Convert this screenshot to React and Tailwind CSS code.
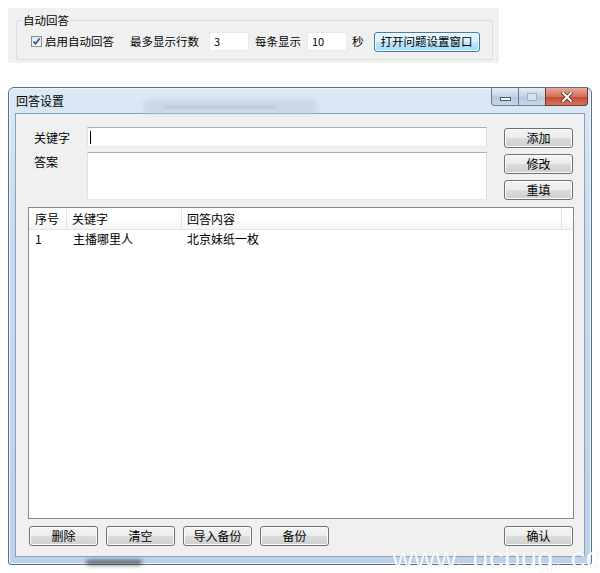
import React from "react";

const font = { fontFamily: '"Noto Sans CJK SC", "Noto Sans", sans-serif' };

function WinButton({ children, className = "" }) {
  return (
    <div
      className={
        "flex items-center justify-center h-[20px] w-[69px] rounded-[3px] border border-[#707070] text-[12px] text-black leading-none bg-[linear-gradient(to_bottom,#f4f4f4_0%,#ececec_48%,#dcdcdc_52%,#cfcfcf_100%)] shadow-[inset_0_0_0_1px_#fbfbfb] " +
        className
      }
    >
      {children}
    </div>
  );
}

export default function App() {
  return (
    <div
      className="relative w-[600px] h-[573px] bg-white overflow-hidden text-[12px] text-black"
      style={font}
    >
      {/* top panel */}
      <div className="ml-[8px] mt-[8px] w-[491px] h-[55px] bg-[#f0f0f0] pt-[12px] pl-[8px] pr-[6px]">
        <div className="relative h-[40px] border border-[#d5dfe5] rounded-[2px]">
          <div className="absolute left-[5px] top-[-9px] px-[1px] bg-[#f0f0f0] leading-[16px] text-[11.5px]">
            自动回答
          </div>
          <div className="flex items-center h-full pt-[3px] pl-[14px] text-[11.5px]">
            <div className="w-[11px] h-[11px] border border-[#8e8f8f] bg-[linear-gradient(to_bottom,#dfe8f2,#f6f9fc)] flex items-center justify-center">
              <svg width="9" height="9" viewBox="0 0 9 9">
                <path d="M1.5 4.5 L3.6 6.8 L7.6 1.6" stroke="#2d4e8a" strokeWidth="1.6" fill="none" />
              </svg>
            </div>
            <span className="ml-[3px]">启用自动回答</span>
            <span className="ml-[16px]">最多显示行数</span>
            <div className="ml-[10px] w-[40px] h-[19px] bg-white border border-[#e3e9ef] flex items-center pl-[4px] text-[11px]">
              3
            </div>
            <span className="ml-[6px]">每条显示</span>
            <div className="ml-[6px] w-[40px] h-[19px] bg-white border border-[#e3e9ef] flex items-center pl-[4px] text-[11px]">
              10
            </div>
            <span className="ml-[5px]">秒</span>
            <div className="ml-[10px] w-[106px] h-[20px] rounded-[3px] border border-[#3c7fb1] flex items-center justify-center bg-[linear-gradient(to_bottom,#eaf6fd_0%,#d9f0fc_48%,#bee6fd_52%,#a7d9f5_100%)] shadow-[inset_0_0_0_1px_#f2fafe]">
              打开问题设置窗口
            </div>
          </div>
        </div>
      </div>

      {/* dialog window */}
      <div className="ml-[8px] mt-[24px] w-[584px] h-[478px] rounded-t-[6px] rounded-b-[3px] border border-[#5a6f86] bg-[linear-gradient(to_bottom,#dce8f5_0%,#c9dbee_30%,#bcd2ea_100%)] flex flex-col px-[6px] pb-[7px] shadow-[inset_0_0_0_1px_#eef4fa]">
        {/* title bar */}
        <div className="relative h-[25px] flex items-center justify-between">
          <div className="absolute left-[128px] top-[11px] w-[175px] h-[15px] rounded-[6px] bg-[#c2d0de] opacity-60 blur-[2px]" />
          <div className="absolute left-[150px] top-[18px] w-[110px] h-[2px] bg-[#8e9aa6] opacity-35 blur-[1px]" />
          <span className="relative ml-[1px] mt-[1px] text-[12px]">回答设置</span>
          <div className="relative self-start flex -mr-[3px]">
            <div className="w-[28px] h-[18px] rounded-bl-[4px] border border-[#6f7f92] border-t-0 bg-[linear-gradient(to_bottom,#e4ecf5,#c3d3e5_50%,#b3c6dc_51%,#c8d8ea)] flex items-center justify-center">
              <div className="w-[11px] h-[4px] mt-[5px] bg-white border border-[#4a5a6e]" />
            </div>
            <div className="w-[26px] h-[18px] border-b border-[#6f7f92] bg-[linear-gradient(to_bottom,#e4ecf5,#c3d3e5_50%,#b3c6dc_51%,#c8d8ea)] flex items-center justify-center">
              <div className="w-[10px] h-[8px] border border-[#94a4b6] bg-[#dde6ef] opacity-80" />
            </div>
            <div className="w-[43px] h-[18px] rounded-br-[4px] border border-[#6f3a33] border-t-0 bg-[linear-gradient(to_bottom,#e9a99b,#d4705e_50%,#c24a36_51%,#d6745f)] flex items-center justify-center">
              <svg width="12" height="10" viewBox="0 0 12 10">
                <path d="M2 1 L10 9 M10 1 L2 9" stroke="#3e2a2a" strokeWidth="3.4" strokeLinecap="square" />
                <path d="M2 1 L10 9 M10 1 L2 9" stroke="#ffffff" strokeWidth="2" strokeLinecap="square" />
              </svg>
            </div>
          </div>
        </div>

        {/* client area */}
        <div className="flex-1 bg-[#f0f0f0] border border-[#8aa1bd] flex flex-col pb-[10px]">
          {/* top form */}
          <div className="flex pt-[13px] pl-[18px]">
            <div className="flex flex-col">
              <div className="flex items-start">
                <span className="w-[53px] mt-[2px]">关键字</span>
                <div className="w-[400px] h-[20px] bg-white border border-[#abadb3] border-l-[#e2e3ea] border-r-[#dbdfe6] border-b-[#e3e9ef] flex items-center pl-[2px]">
                  <div className="w-[1px] h-[13px] bg-black" />
                </div>
              </div>
              <div className="flex items-start mt-[5px]">
                <span className="w-[53px] mt-[1px]">答案</span>
                <div className="w-[400px] h-[48px] bg-white border border-[#abadb3] border-l-[#e2e3ea] border-r-[#dbdfe6] border-b-[#e3e9ef]" />
              </div>
            </div>
            <div className="ml-[17px] mt-[1px] flex flex-col gap-[6px]">
              <WinButton>添加</WinButton>
              <WinButton>修改</WinButton>
              <WinButton>重填</WinButton>
            </div>
          </div>

          {/* list view */}
          <div className="ml-[12px] mt-[7px] w-[546px] flex-1 bg-white border border-[#828790] flex flex-col">
            <div className="flex h-[22px] border-b border-[#e5e5e5] bg-[linear-gradient(to_bottom,#ffffff_0%,#ffffff_50%,#f3f4f6_100%)]">
              <div className="w-[38px] pl-[6px] flex items-center border-r border-[#e5e5e5]">序号</div>
              <div className="w-[115px] pl-[5px] flex items-center border-r border-[#e5e5e5]">关键字</div>
              <div className="w-[380px] pl-[5px] flex items-center border-r border-[#e0e0e0]">回答内容</div>
              <div className="flex-1" />
            </div>
            <div className="flex h-[17px] items-center">
              <div className="w-[38px] pl-[6px]">1</div>
              <div className="w-[115px] pl-[6px]">主播哪里人</div>
              <div className="w-[380px] pl-[5px]">北京妹纸一枚</div>
            </div>
          </div>

          {/* bottom buttons */}
          <div className="flex mt-[7px] ml-[13px] mr-[11px]">
            <div className="flex gap-[8px]">
              <WinButton>删除</WinButton>
              <WinButton>清空</WinButton>
              <WinButton>导入备份</WinButton>
              <WinButton>备份</WinButton>
            </div>
            <div className="flex-1" />
            <WinButton>确认</WinButton>
          </div>
        </div>
      </div>

      {/* shadow under window */}
      <div className="absolute left-[86px] top-[560px] w-[56px] h-[5px] rounded-full bg-[#2a2f36] opacity-70 blur-[2px]" />

      {/* watermark */}
      <div
        className="absolute left-[392px] top-[546px] h-[24px] text-[30px] leading-[24px] text-white opacity-90 whitespace-nowrap [text-shadow:0_0_1px_#aab8c6]"
        style={{ fontFamily: '"Liberation Sans", Arial, sans-serif' }}
      >
        www. ucbug. co
      </div>
    </div>
  );
}
